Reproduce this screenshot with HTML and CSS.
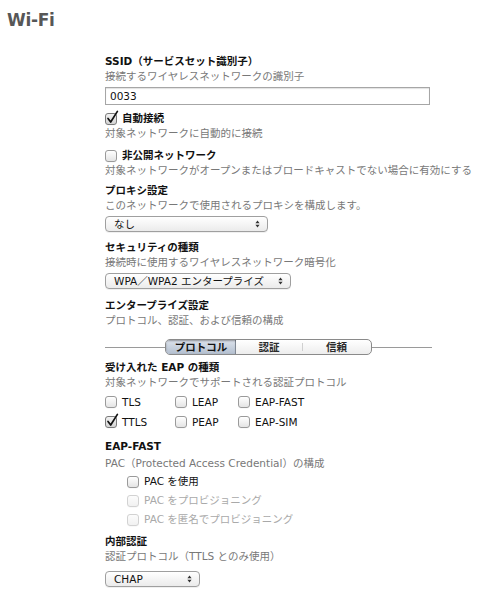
FILE: index.html
```html
<!DOCTYPE html>
<html lang="ja">
<head>
<meta charset="utf-8">
<title>Wi-Fi</title>
<link rel="stylesheet" href="styles.css">
</head>
<body>
<h1 class="title">Wi-Fi</h1>
<main class="form">
  <section class="field f-ssid">
    <div class="label">SSID（サービスセット識別子）</div>
    <div class="desc">接続するワイヤレスネットワークの識別子</div>
    <div class="textbox">0033</div>
  </section>

  <section class="field f-auto">
    <div class="check label-row">
      <span class="cb checked"><svg class="tick" viewBox="0 0 14 15"><path d="M3 8.4 L5.7 12 L12.4 1.4" fill="none" stroke="#111" stroke-width="1.7" stroke-linecap="round" stroke-linejoin="round"/></svg></span>
      <span class="label">自動接続</span>
    </div>
    <div class="desc">対象ネットワークに自動的に接続</div>
  </section>

  <section class="field f-hidden">
    <div class="check label-row">
      <span class="cb"></span>
      <span class="label">非公開ネットワーク</span>
    </div>
    <div class="desc">対象ネットワークがオープンまたはブロードキャストでない場合に有効にする</div>
  </section>

  <section class="field f-proxy">
    <div class="label">プロキシ設定</div>
    <div class="desc">このネットワークで使用されるプロキシを構成します。</div>
    <div class="select w-proxy"><span>なし</span><svg class="arrows" viewBox="0 0 5 8"><path d="M0.4 3.3 L2.5 0.4 L4.6 3.3 Z M0.4 4.7 L2.5 7.6 L4.6 4.7 Z" fill="#333"/></svg></div>
  </section>

  <section class="field f-sec">
    <div class="label">セキュリティの種類</div>
    <div class="desc">接続時に使用するワイヤレスネットワーク暗号化</div>
    <div class="select w-sec"><span>WPA／WPA2 エンタープライズ</span><svg class="arrows" viewBox="0 0 5 8"><path d="M0.4 3.3 L2.5 0.4 L4.6 3.3 Z M0.4 4.7 L2.5 7.6 L4.6 4.7 Z" fill="#333"/></svg></div>
  </section>

  <section class="field f-ent">
    <div class="label">エンタープライズ設定</div>
    <div class="desc">プロトコル、認証、および信頼の構成</div>
    <div class="seg-row">
      <div class="seg">
        <span class="seg-item s1 selected">プロトコル</span>
        <span class="seg-item s2">認証</span>
        <span class="seg-item s3">信頼</span>
      </div>
    </div>
  </section>

  <section class="field f-eap">
    <div class="label">受け入れた EAP の種類</div>
    <div class="desc">対象ネットワークでサポートされる認証プロトコル</div>
    <div class="eap-grid">
      <div class="check"><span class="cb"></span><span>TLS</span></div>
      <div class="check"><span class="cb"></span><span>LEAP</span></div>
      <div class="check"><span class="cb"></span><span>EAP-FAST</span></div>
      <div class="check"><span class="cb checked"><svg class="tick" viewBox="0 0 14 15"><path d="M3 8.4 L5.7 12 L12.4 1.4" fill="none" stroke="#111" stroke-width="1.7" stroke-linecap="round" stroke-linejoin="round"/></svg></span><span>TTLS</span></div>
      <div class="check"><span class="cb"></span><span>PEAP</span></div>
      <div class="check"><span class="cb"></span><span>EAP-SIM</span></div>
    </div>
  </section>

  <section class="field f-fast">
    <div class="label">EAP-FAST</div>
    <div class="desc desc-pac">PAC（Protected Access Credential）の構成</div>
    <div class="pac-list">
      <div class="check pac"><span class="cb"></span><span>PAC を使用</span></div>
      <div class="check pac disabled"><span class="cb"></span><span>PAC をプロビジョニング</span></div>
      <div class="check pac disabled"><span class="cb"></span><span>PAC を匿名でプロビジョニング</span></div>
    </div>
  </section>

  <section class="field f-inner">
    <div class="label">内部認証</div>
    <div class="desc">認証プロトコル（TTLS とのみ使用）</div>
    <div class="select w-inner"><span>CHAP</span><svg class="arrows" viewBox="0 0 5 8"><path d="M0.4 3.3 L2.5 0.4 L4.6 3.3 Z M0.4 4.7 L2.5 7.6 L4.6 4.7 Z" fill="#333"/></svg></div>
  </section>
</main>
</body>
</html>
```

FILE: styles.css
```css
html, body {
  margin: 0;
  padding: 0;
  background: #ffffff;
}

body {
  width: 480px;
  height: 600px;
  overflow: hidden;
  font-family: "DejaVu Sans", "Noto Sans CJK JP", sans-serif;
  font-size: 10.5px;
  line-height: 15px;
  color: #111111;
}

.title {
  margin: 10px 0 0 7px;
  font-size: 17px;
  line-height: 20px;
  font-weight: bold;
  color: #575757;
  letter-spacing: -0.3px;
}

.form {
  display: flex;
  flex-direction: column;
  padding-left: 105px;
  margin-top: 24px;
}

.field {
  display: flex;
  flex-direction: column;
  align-items: flex-start;
}

.label {
  font-weight: bold;
  color: #111111;
}

.desc {
  color: #787878;
}

/* vertical rhythm */
.f-auto { margin-top: 6px; }
.f-hidden { margin-top: 7px; }
.f-proxy { margin-top: 5px; }
.f-sec { margin-top: 8px; }
.f-ent { margin-top: 9px; }
.f-eap { margin-top: 5px; }
.f-fast { margin-top: 7px; }
.f-inner { margin-top: 5px; }

.desc-pac { margin-top: 2px; }

/* text field */
.textbox {
  box-sizing: border-box;
  width: 325px;
  height: 18px;
  margin-top: 3px;
  padding-left: 4px;
  border: 1px solid #a6a6a6;
  box-shadow: inset 0 1px 1px rgba(0, 0, 0, 0.12);
  line-height: 16px;
  color: #111;
  background: #fff;
}

/* checkboxes */
.check {
  display: flex;
  align-items: center;
  gap: 5px;
  color: #111111;
}

.cb {
  position: relative;
  flex: none;
  box-sizing: border-box;
  width: 12px;
  height: 12px;
  border: 1px solid #9a9a9a;
  border-radius: 3px;
  background: linear-gradient(#ffffff, #e4e4e4);
  box-shadow: 0 0.5px 0 rgba(0, 0, 0, 0.05);
}

.cb.checked {
  border-color: #7a7a7a;
  background: linear-gradient(#f2f2f2, #d4d4d4);
}

.cb .tick {
  position: absolute;
  left: -1px;
  top: -4px;
  width: 14px;
  height: 15px;
}

.check.disabled {
  color: #a9a9a9;
}

.check.disabled .cb {
  border-color: #d2d2d2;
  background: linear-gradient(#fcfcfc, #f1f1f1);
}

/* popup buttons */
.select {
  box-sizing: border-box;
  display: flex;
  align-items: center;
  justify-content: space-between;
  height: 16px;
  margin-top: 3px;
  padding: 0 7px 0 8px;
  border: 1px solid #9f9f9f;
  border-radius: 4px;
  background: linear-gradient(#ffffff, #ebebeb);
  box-shadow: 0 1px 0 rgba(0, 0, 0, 0.06);
  color: #111;
  line-height: 14px;
}

.select .arrows {
  width: 5px;
  height: 8px;
  flex: none;
}

.w-proxy { width: 163px; }
.w-sec { width: 186px; }
.w-inner { width: 95px; margin-top: 7px; }

/* segmented control */
.seg-row {
  display: flex;
  align-items: center;
  width: 327px;
  margin-top: 11px;
}

.seg-row::before,
.seg-row::after {
  content: "";
  flex: 1;
  height: 1px;
  background: #9a9a9a;
}

.seg {
  display: flex;
  box-sizing: border-box;
  height: 16px;
  border: 1px solid #8a8a8a;
  border-radius: 5px;
  overflow: hidden;
  background: linear-gradient(#ffffff, #ededed);
}

.seg-item {
  position: relative;
  display: flex;
  align-items: center;
  justify-content: center;
  height: 14px;
  font-weight: bold;
  color: #2b2b2b;
  line-height: 14px;
}

.seg-item.s1 { width: 70px; }
.seg-item.s2 { width: 66px; }
.seg-item.s3 { width: 69px; }

.seg-item.selected {
  background: linear-gradient(#dde3ec, #b3bfcf);
  box-shadow: inset 0 1px 2px rgba(0, 0, 0, 0.35), inset -1px 0 0 #8d96a3;
  color: #111;
}

.seg-item.s3::before {
  content: "";
  position: absolute;
  left: 0;
  top: 3px;
  bottom: 3px;
  width: 1px;
  background: #d0d0d0;
}

/* EAP checkbox grid */
.eap-grid {
  display: grid;
  grid-template-columns: 70px 63px auto;
  grid-auto-rows: 20px;
  align-items: center;
  margin-top: 2px;
}

.pac-list {
  display: flex;
  flex-direction: column;
  margin-top: 1px;
}

.check.pac {
  height: 19px;
  margin-left: 22px;
}
```
